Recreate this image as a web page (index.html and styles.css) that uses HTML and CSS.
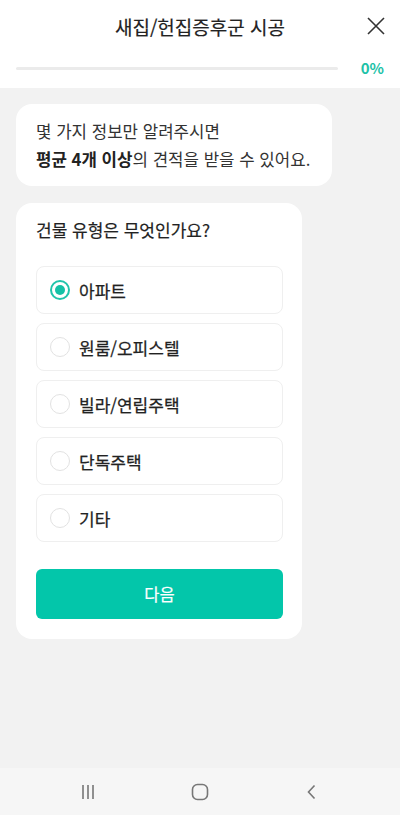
FILE: index.html
```html
<!DOCTYPE html>
<html lang="ko">
<head>
    <meta charset="UTF-8">
    <meta name="viewport" content="width=device-width, initial-scale=1.0">
    <title>새집/헌집증후군 시공</title>
    <link rel="stylesheet" href="styles.css">
</head>
<body>
    <div class="app">
        <header class="header">
            <div class="title-row">
                <h1>새집/헌집증후군 시공</h1>
                <button class="close-btn" aria-label="닫기">
                    <svg width="20" height="20" viewBox="0 0 20 20">
                        <path d="M2 2 L18 18 M18 2 L2 18" stroke="#333" stroke-width="1.6" fill="none"/>
                    </svg>
                </button>
            </div>
            <div class="progress-row">
                <div class="progress-track"><div class="progress-fill" style="width: 0%"></div></div>
                <span class="progress-text">0%</span>
            </div>
        </header>

        <main class="content">
            <div class="bubble">
                몇 가지 정보만 알려주시면<br>
                <strong>평균 4개 이상</strong>의 견적을 받을 수 있어요.
            </div>

            <div class="card">
                <h2>건물 유형은 무엇인가요?</h2>

                <div class="options">
                    <label class="option">
                        <input type="radio" name="type" checked>
                        <span class="radio"></span>
                        <span>아파트</span>
                    </label>
                    <label class="option">
                        <input type="radio" name="type">
                        <span class="radio"></span>
                        <span>원룸/오피스텔</span>
                    </label>
                    <label class="option">
                        <input type="radio" name="type">
                        <span class="radio"></span>
                        <span>빌라/연립주택</span>
                    </label>
                    <label class="option">
                        <input type="radio" name="type">
                        <span class="radio"></span>
                        <span>단독주택</span>
                    </label>
                    <label class="option">
                        <input type="radio" name="type">
                        <span class="radio"></span>
                        <span>기타</span>
                    </label>
                </div>

                <button class="next-btn">다음</button>
            </div>
        </main>

        <nav class="nav-bar">
            <svg width="16" height="16" viewBox="0 0 16 16">
                <path d="M3 1 V15 M8 1 V15 M13 1 V15" stroke="#777" stroke-width="1.6" fill="none"/>
            </svg>
            <svg width="18" height="18" viewBox="0 0 18 18">
                <rect x="1.5" y="1.5" width="15" height="15" rx="5" stroke="#777" stroke-width="1.6" fill="none"/>
            </svg>
            <svg width="16" height="16" viewBox="0 0 16 16">
                <path d="M10.5 1.5 L4.5 8 L10.5 14.5" stroke="#777" stroke-width="1.6" fill="none"/>
            </svg>
        </nav>
    </div>
</body>
</html>
```

FILE: styles.css
```css
body {
    font-family: "Noto Sans CJK KR", "Noto Sans", sans-serif;
    margin: 0;
    padding: 0;
    color: #222;
    background-color: #f2f2f2;
}

.app {
    display: flex;
    flex-direction: column;
    height: 815px;
}

.header {
    background-color: #ffffff;
    height: 88px;
    box-sizing: border-box;
}

.title-row {
    display: flex;
    align-items: center;
    justify-content: center;
    height: 52px;
    position: relative;
}

.title-row h1 {
    margin: 0;
    font-size: 19px;
    font-weight: 400;
    color: #222;
    -webkit-text-stroke: 0.2px #222;
}

.close-btn {
    position: absolute;
    right: 14px;
    top: 16px;
    background: none;
    border: none;
    padding: 0;
    width: 20px;
    height: 20px;
}

.progress-row {
    display: flex;
    align-items: center;
    padding: 6px 16px 0 16px;
    gap: 23px;
}

.progress-track {
    flex: 1;
    height: 3px;
    background-color: #ebebeb;
    border-radius: 2px;
}

.progress-fill {
    height: 100%;
    background-color: #00c4a8;
}

.progress-text {
    font-size: 15px;
    font-weight: 700;
    color: #1fc2a8;
    line-height: 20px;
}

.content {
    flex: 1;
    padding: 16px 16px;
    display: flex;
    flex-direction: column;
    align-items: flex-start;
    gap: 17px;
}

.bubble {
    background-color: #ffffff;
    border-radius: 16px;
    padding: 13px 10px 13px 20px;
    width: 316px;
    box-sizing: border-box;
    font-size: 16.8px;
    line-height: 28px;
    color: #333;
}

.bubble strong {
    font-weight: 700;
    color: #222;
}

.card {
    background-color: #ffffff;
    border-radius: 16px;
    width: 286px;
    box-sizing: border-box;
    padding: 14px 19px 20px 20px;
}

.card h2 {
    margin: 0 0 23px 0;
    font-size: 17px;
    font-weight: 400;
    line-height: 26px;
    -webkit-text-stroke: 0.2px #222;
}

.options {
    display: flex;
    flex-direction: column;
    gap: 9px;
}

.option {
    display: flex;
    align-items: center;
    gap: 9px;
    height: 48px;
    box-sizing: border-box;
    padding: 0 13px;
    border: 1px solid #efefef;
    border-radius: 8px;
    font-size: 17px;
    font-weight: 400;
    color: #222;
    -webkit-text-stroke: 0.25px #222;
}

.option input {
    display: none;
}

.radio {
    width: 20px;
    height: 20px;
    box-sizing: border-box;
    border: 1.5px solid #e2e2e2;
    border-radius: 50%;
    display: flex;
    align-items: center;
    justify-content: center;
}

.option input:checked + .radio {
    border: 2px solid #21c4ab;
}

.option input:checked + .radio::after {
    content: "";
    width: 10px;
    height: 10px;
    border-radius: 50%;
    background-color: #14c1a6;
}

.next-btn {
    margin-top: 27px;
    width: 100%;
    height: 50px;
    border: none;
    border-radius: 6px;
    background-color: #03c6aa;
    color: #ffffff;
    font-family: inherit;
    font-size: 16.5px;
    font-weight: 400;
    -webkit-text-stroke: 0.2px #ffffff;
}

.nav-bar {
    height: 47px;
    background-color: #f6f6f6;
    display: flex;
    justify-content: center;
    align-items: center;
    gap: 95px;
}
```
